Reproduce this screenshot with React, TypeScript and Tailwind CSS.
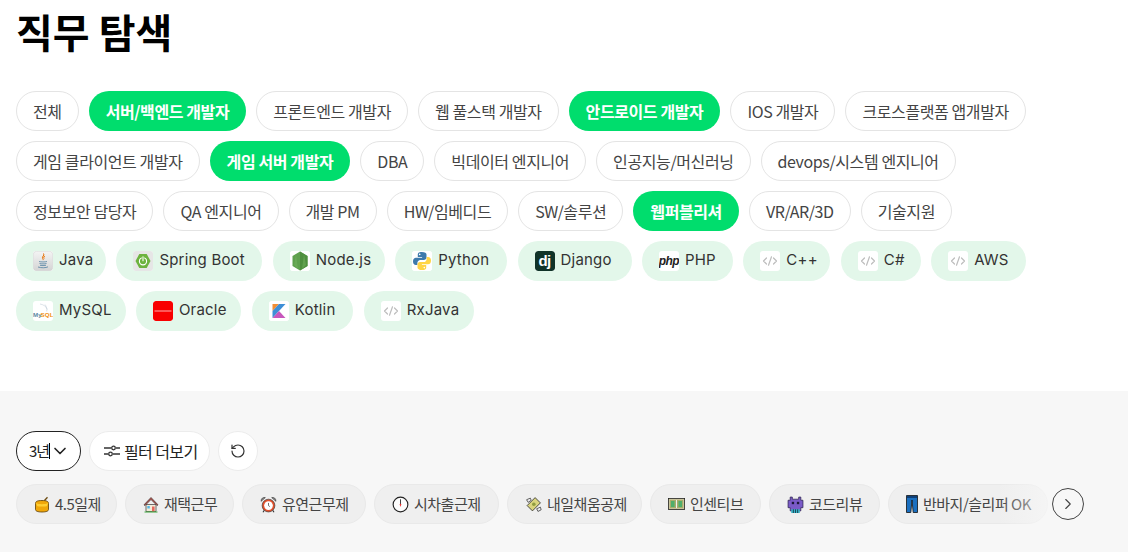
import React from "react";
import { ChevronDown, ChevronRight, RotateCcw } from "lucide-react";

const KR = "font-['Noto_Sans_CJK_KR',sans-serif]";

type Job = { t: string; on?: boolean };
const rows: Job[][] = [
  [{ t: "전체" }, { t: "서버/백엔드 개발자", on: true }, { t: "프론트엔드 개발자" }, { t: "웹 풀스택 개발자" }, { t: "안드로이드 개발자", on: true }, { t: "IOS 개발자" }, { t: "크로스플랫폼 앱개발자" }],
  [{ t: "게임 클라이언트 개발자" }, { t: "게임 서버 개발자", on: true }, { t: "DBA" }, { t: "빅데이터 엔지니어" }, { t: "인공지능/머신러닝" }, { t: "devops/시스템 엔지니어" }],
  [{ t: "정보보안 담당자" }, { t: "QA 엔지니어" }, { t: "개발 PM" }, { t: "HW/임베디드" }, { t: "SW/솔루션" }, { t: "웹퍼블리셔", on: true }, { t: "VR/AR/3D" }, { t: "기술지원" }],
];

const Code = () => (
  <svg viewBox="0 0 20 20" className="w-5 h-5" fill="none" stroke="#bdbdbd" strokeWidth="1.2" strokeLinecap="round" strokeLinejoin="round">
    <path d="M6.5 7 3.5 10l3 3M13.5 7l3 3-3 3M11.500 5.800 8.500 14.200" />
  </svg>
);

const icons: Record<string, React.ReactNode> = {
  Java: (
    <svg viewBox="0 0 20 20" className="w-5 h-5">
      <defs>
        <linearGradient id="jv" x1="0" y1="0" x2="0" y2="1"><stop offset="0" stopColor="#f4f4f4" /><stop offset="1" stopColor="#d4d4d4" /></linearGradient>
      </defs>
      <rect x="0.300" y="0.300" width="19.400" height="19.400" rx="3" fill="url(#jv)" stroke="#cfcfcf" strokeWidth="0.500" />
      <path d="M10.500 2.500c1.500 2-2 3-.8 5 .4.600.6 1 .4 1.600M12 5c-1.300.8-1.500 1.600-.9 2.600" stroke="#e76f00" strokeWidth="1" fill="none" />
      <path d="M6 10.500c2 .6 6 .6 8 0M6.500 12.500c2 .5 5 .5 7 0M7 14.300c2 .4 4 .4 6 0M5 16c3 1 8 1 10-.2" stroke="#5382a1" strokeWidth="0.800" fill="none" />
    </svg>
  ),
  "Spring Boot": (
    <svg viewBox="0 0 20 20" className="w-5 h-5">
      <rect width="20" height="20" fill="#e6e6e6" rx="1" />
      <path d="M6.300 3h7.400L17.500 10l-3.800 7H6.300L2.500 10z" fill="#6db33f" />
      <circle cx="10" cy="10.300" r="3.600" fill="none" stroke="#fff" strokeWidth="1.100" />
      <path d="M10 5.500v4" stroke="#6db33f" strokeWidth="2.400" />
      <path d="M10 5.800v4" stroke="#fff" strokeWidth="1.100" strokeLinecap="round" />
    </svg>
  ),
  "Node.js": (
    <svg viewBox="0 0 20 20" className="w-5 h-5">
      <rect width="20" height="20" fill="#fff" rx="2" />
      <path d="M10 0.500 17.500 5v10L10 19.500 2.500 15V5z" fill="#5fa04e" />
      <path d="M10 0.500 17.500 5v10L10 19.500z" fill="#4f8f3f" />
      <path d="M6 3 4 14l4 4zM14 3l2 11-4 4z" fill="#76b35f" opacity="0.500" />
    </svg>
  ),
  Python: (
    <svg viewBox="0 0 20 20" className="w-5 h-5">
      <rect width="20" height="20" fill="#fff" rx="2" />
      <path d="M9.800 1C6.500 1 5.800 2.300 5.800 3.600V6h4.300v.7H4C2.300 6.700 1 8 1 10.300c0 2.500 1.200 3.700 2.800 3.700h1.600v-2.200c0-1.500 1.300-2.900 2.900-2.900h3.900c1.300 0 2.300-1 2.300-2.300V3.600C14.500 2.200 13 1 9.800 1z" fill="#3d7aab" />
      <path d="M10.200 19c3.300 0 4-1.300 4-2.600V14H9.900v-.7H16c1.700 0 3-1.300 3-3.600 0-2.500-1.200-3.700-2.800-3.700h-1.600v2.200c0 1.500-1.300 2.900-2.900 2.900H7.800c-1.300 0-2.300 1-2.300 2.300v3c0 1.400 1.500 2.600 4.700 2.600z" fill="#ffd546" />
      <circle cx="7.700" cy="3.400" r="0.800" fill="#fff" />
      <circle cx="12.300" cy="16.600" r="0.800" fill="#fff" />
    </svg>
  ),
  Django: (
    <div className="w-5 h-5 bg-[#103328] rounded-[3px] flex items-center justify-center font-['Liberation_Sans',sans-serif] font-bold text-[15px] leading-none text-white tracking-[-0.5px] pb-[2px]">dj</div>
  ),
  PHP: (
    <div className="w-5 h-5 flex items-center justify-center font-['Liberation_Sans',sans-serif] italic font-bold text-[12px] text-[#222] leading-none tracking-[-0.5px]">php</div>
  ),
  MySQL: (
    <svg viewBox="0 0 20 20" className="w-5 h-5">
      <path d="M7 3c3 .5 6 2 7.500 5.500M12 3.500c1 1 2 4 1.800 7" stroke="#b9c6d2" strokeWidth="0.500" fill="none" />
      <text x="0" y="16" fontSize="6.200" fontWeight="700" fontFamily="Liberation Sans, sans-serif" fill="#5d87a1">My</text>
      <text x="7.500" y="16" fontSize="6.200" fontWeight="700" fontFamily="Liberation Sans, sans-serif" fill="#f29111">SQL</text>
    </svg>
  ),
  Oracle: (
    <svg viewBox="0 0 20 20" className="w-5 h-5">
      <rect width="20" height="20" rx="2.500" fill="#f80000" />
      <rect x="1.500" y="9.500" width="17" height="1" fill="#ffb0b0" />
    </svg>
  ),
  Kotlin: (
    <svg viewBox="0 0 20 20" className="w-5 h-5">
      <rect width="20" height="20" fill="#fff" rx="2" />
      <path d="M3.500 3h6.500l-6.500 7z" fill="#f18e33" />
      <path d="M10 3h6.500L3.500 17v-7z" fill="#3d8fd6" />
      <path d="M10 10l6.500 7h-13z" fill="#c757bc" />
    </svg>
  ),
};

const techRows: [string, string][][] = [
  [["Java", "w-[90px]"], ["Spring Boot", "w-[146px]"], ["Node.js", "w-[112px]"], ["Python", "w-[112px]"], ["Django", "w-[114px]"], ["PHP", "w-[91px]"], ["C++", "w-[87px]"], ["C#", "w-[80px]"], ["AWS", "w-[95px]"]],
  [["MySQL", "w-[109.5px]"], ["Oracle", "w-[105.5px]"], ["Kotlin", "w-[101.5px]"], ["RxJava", "w-[110px]"]],
];

const Honey = () => (
  <svg viewBox="0 0 16 16" className="w-4 h-[17px]">
    <path d="M1.500 7c0-2 1.500-3 6.500-3s6.500 1 6.500 3v6c0 1.500-2 2.500-6.500 2.500S1.500 14.500 1.500 13z" fill="#f0a70a" stroke="#5d3f06" strokeWidth="0.800" />
    <path d="M2 6.500c2 1.600 10 1.600 12 0L13 9.500c-1 .8-9 .8-10 0z" fill="#ffcf33" />
    <path d="M10.500 4 13.500 .8" stroke="#6b4a10" strokeWidth="1.300" />
  </svg>
);
const House = () => (
  <svg viewBox="0 0 16 16" className="w-4 h-[17px]">
    <path d="M3 8v7h10V8z" fill="#f4ead8" stroke="#333" strokeWidth="0.700" />
    <path d="M8 1 1 8.300l1 .7L8 3l6 6 1-.7z" fill="#c9534a" stroke="#333" strokeWidth="0.700" />
    <rect x="4.300" y="9.500" width="2.500" height="2.500" fill="#56b9e6" />
    <rect x="9" y="10" width="2.600" height="5" fill="#e4685d" />
    <path d="M1.500 15.500h13" stroke="#3ca83c" strokeWidth="1" />
  </svg>
);
const Alarm = () => (
  <svg viewBox="0 0 16 16" className="w-[17px] h-[17px]">
    <path d="M1 5c0-3 2-4 4-3.500zM15 5c0-3-2-4-4-3.500z" fill="#8a8a8a" stroke="#333" strokeWidth="0.600" />
    <path d="M4 13.500 2.800 15.300M12 13.500l1.200 1.800" stroke="#333" strokeWidth="1" />
    <circle cx="8" cy="9" r="6" fill="#e2502c" stroke="#333" strokeWidth="0.600" />
    <circle cx="8" cy="9" r="4.100" fill="#fff" />
    <path d="M8 6.500V9l1.300 1" stroke="#444" strokeWidth="0.700" fill="none" />
  </svg>
);
const Clock = () => (
  <svg viewBox="0 0 18 18" className="w-[17px] h-[17px]">
    <circle cx="9" cy="9" r="7.800" fill="#fdfdfd" stroke="#222" strokeWidth="1.200" />
    <path d="M9 3.500V9" stroke="#222" strokeWidth="0.900" />
    <path d="M9 9v2" stroke="#e33" strokeWidth="0.900" />
    <circle cx="9" cy="9" r="0.900" fill="#e33" />
  </svg>
);
const Money = () => (
  <svg viewBox="0 0 16 16" className="w-[17px] h-[17px]">
    <path d="M2 9 9.500 1.500l5 5L7 14z" fill="#d9d47e" stroke="#333" strokeWidth="0.800" />
    <circle cx="8.300" cy="7.800" r="1.700" fill="#8f9c3f" />
    <path d="M1.500 3.500 5 2l.8 2-2.800 2zM11 12l3.500-1.500.7 2.500-3 1.500z" fill="#eee" stroke="#333" strokeWidth="0.700" />
  </svg>
);
const Bill = () => (
  <svg viewBox="0 0 17 12" className="w-[17px] h-3">
    <rect x="0.400" y="0.400" width="16.200" height="11.200" fill="#c9c49a" stroke="#222" strokeWidth="0.800" />
    <rect x="2" y="2" width="13" height="8" fill="#a7ad6a" />
    <rect x="3" y="3" width="3.500" height="6" fill="#4fae6b" />
    <rect x="10.500" y="3" width="3.500" height="6" fill="#4fae6b" />
    <path d="M8.500 2v8" stroke="#eee" strokeWidth="1" />
  </svg>
);
const Monster = () => (
  <svg viewBox="0 0 16 16" className="w-[17px] h-[17px]">
    <path d="M3 1h2v2h6V1h2v3h2v7h-2v3H3v-3H1V4h2z" fill="#7a5ac8" stroke="#2c2250" strokeWidth="0.700" />
    <rect x="4.500" y="5.500" width="2.200" height="2.200" fill="#1c1638" />
    <rect x="9.300" y="5.500" width="2.200" height="2.200" fill="#1c1638" />
    <path d="M4 12.500h8V16H4z" fill="#37b5c8" />
    <path d="M6 12.500V16M8 12.500V16M10 12.500V16" stroke="#123" strokeWidth="0.700" />
  </svg>
);
const Jeans = () => (
  <svg viewBox="0 0 12 18" className="w-3 h-[18px]">
    <path d="M.5.5h11v17H7.200L6 5 4.800 17.500H.5z" fill="#1a6fc0" stroke="#111" strokeWidth="0.800" />
    <rect x="1" y="1" width="10" height="2" fill="#0e3f78" />
  </svg>
);

const perks: [React.ReactNode, string, string][] = [
  [<Honey />, "4.5일제", "w-[101px]"],
  [<House />, "재택근무", "w-[109px]"],
  [<Alarm />, "유연근무제", "w-[124px]"],
  [<Clock />, "시차출근제", "w-[125px]"],
  [<Money />, "내일채움공제", "w-[135px]"],
  [<Bill />, "인센티브", "w-[111px]"],
  [<Monster />, "코드리뷰", "w-[111px]"],
  [<Jeans />, "반바지/슬리퍼 OK", "w-[160px]"],
];

export default function App() {
  return (
    <div className={`w-[1128px] h-[552px] overflow-hidden bg-white flex flex-col ${KR}`}>
      <div className="h-[391px] pl-4">
        <h1 className="pt-[2px] h-[91px] text-[40px] leading-[58px] font-bold text-black">직무 탐색</h1>
        <div className="flex flex-col gap-[10px]">
          {rows.map((r, i) => (
            <div key={i} className="flex gap-[10px]">
              {r.map((j) =>
                j.on ? (
                  <div key={j.t} className="h-10 px-[17px] rounded-full bg-[#00dd6d] text-white font-bold text-[16px] tracking-[-0.4px] flex items-center">{j.t}</div>
                ) : (
                  <div key={j.t} className="h-10 px-4 rounded-full bg-white border border-[#e4e4e4] text-[#444] text-[16px] tracking-[-0.4px] flex items-center">{j.t}</div>
                ),
              )}
            </div>
          ))}
          {techRows.map((r, i) => (
            <div key={i} className="flex gap-[10.4px]">
              {r.map(([t, w]) => (
                <div key={t} className={`${w} h-10 pl-[17px] rounded-full bg-[#e3f7ea] text-[#333] text-[15px] tracking-[0.2px] flex items-center gap-[6px] font-['Inter',sans-serif]`}>
                  <div className="w-5 h-5 bg-white rounded-[3px] overflow-hidden flex items-center justify-center shrink-0">{icons[t] ?? <Code />}</div>
                  <span className="pb-px">{t}</span>
                </div>
              ))}
            </div>
          ))}
        </div>
      </div>
      <div className="flex-1 bg-[#f7f7f7] pl-4 pt-10">
        <div className="flex gap-2 h-10">
          <div className="w-[65px] rounded-full bg-white border border-[#222] flex items-center pl-3 text-[15px] tracking-[-1px] text-[#222]">
            <span>3년</span>
            <span className="w-px h-4 bg-black" />
            <ChevronDown className="w-5 h-5 shrink-0" strokeWidth={2} />
          </div>
          <div className="w-[121px] pl-[14px] rounded-full bg-white border border-[#ececec] flex items-center gap-1 text-[16px] tracking-[-0.6px] text-[#222]">
            <svg viewBox="0 0 16 16" className="w-4 h-4" fill="none" stroke="#333" strokeWidth="1.300">
              <path d="M0 5h7M12 5h4M0 11h4M9 11h7" />
              <circle cx="9.500" cy="5" r="1.800" />
              <circle cx="6.500" cy="11" r="1.800" />
            </svg>
            필터 더보기
          </div>
          <div className="w-10 rounded-full bg-white border border-[#ececec] flex items-center justify-center">
            <RotateCcw className="w-4 h-4 text-[#333]" strokeWidth={1.8} />
          </div>
        </div>
        <div className="flex items-center mt-[13px]">
          <div className="relative w-[1032px] overflow-hidden">
            <div className="flex gap-2">
              {perks.map(([ic, t, w]) => (
                <div key={t} className={`${w} h-10 shrink-0 pl-[17px] rounded-full bg-[#efefef] border border-[#e9e9e9] flex items-center gap-[5px] text-[15px] tracking-[-0.5px] text-[#444]`}>
                  <span className="flex items-center justify-center shrink-0">{ic}</span>
                  <span className="whitespace-nowrap">{t}</span>
                </div>
              ))}
            </div>
            <div className="absolute right-0 top-0 bottom-0 w-[50px] bg-gradient-to-r from-transparent to-[#f7f7f7b0]" />
          </div>
          <div className="ml-1 w-8 h-8 rounded-full border border-[#444] flex items-center justify-center">
            <ChevronRight className="w-[18px] h-[18px] text-[#444]" strokeWidth={1.5} />
          </div>
        </div>
      </div>
    </div>
  );
}
